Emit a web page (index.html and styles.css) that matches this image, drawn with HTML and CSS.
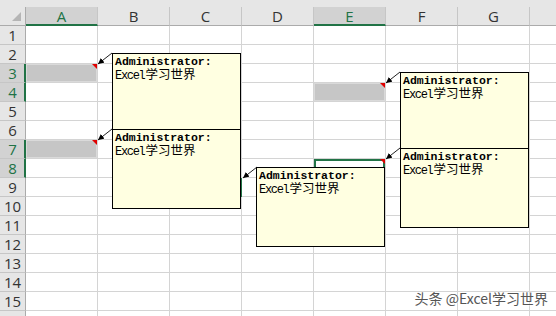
FILE: index.html
```html
<!DOCTYPE html>
<html lang="zh-CN">
<head>
  <meta charset="UTF-8" />
  <title>批注</title>
  <link rel="stylesheet" href="styles.css">
</head>
<body>
  <div class="sheet">
    <div class="head">
      <div class="corner">
        <svg width="26" height="19" viewBox="0 0 26 19"><polygon points="12,14 21,5 21,14" fill="#b5b5b5"/></svg>
      </div>
      <div class="ch on">A</div>
      <div class="ch">B</div>
      <div class="ch">C</div>
      <div class="ch">D</div>
      <div class="ch on">E</div>
      <div class="ch">F</div>
      <div class="ch">G</div>
      <div class="ch last"></div>
    </div>

    <div class="row"><div class="rh">1</div><div class="c"></div><div class="c"></div><div class="c"></div><div class="c"></div><div class="c"></div><div class="c"></div><div class="c"></div><div class="c last"></div></div>
    <div class="row"><div class="rh">2</div><div class="c"></div><div class="c"></div><div class="c"></div><div class="c"></div><div class="c"></div><div class="c"></div><div class="c"></div><div class="c last"></div></div>
    <div class="row"><div class="rh on">3</div><div class="c sel note-mark"></div><div class="c"></div><div class="c"></div><div class="c"></div><div class="c"></div><div class="c"></div><div class="c"></div><div class="c last"></div></div>
    <div class="row"><div class="rh on">4</div><div class="c"></div><div class="c"></div><div class="c"></div><div class="c"></div><div class="c sel note-mark"></div><div class="c"></div><div class="c"></div><div class="c last"></div></div>
    <div class="row"><div class="rh">5</div><div class="c"></div><div class="c"></div><div class="c"></div><div class="c"></div><div class="c"></div><div class="c"></div><div class="c"></div><div class="c last"></div></div>
    <div class="row"><div class="rh">6</div><div class="c"></div><div class="c"></div><div class="c"></div><div class="c"></div><div class="c"></div><div class="c"></div><div class="c"></div><div class="c last"></div></div>
    <div class="row"><div class="rh on">7</div><div class="c sel note-mark"></div><div class="c"></div><div class="c"></div><div class="c"></div><div class="c"></div><div class="c"></div><div class="c"></div><div class="c last"></div></div>
    <div class="row"><div class="rh on">8</div><div class="c"></div><div class="c"></div><div class="c"></div><div class="c"></div><div class="c active note-mark"></div><div class="c"></div><div class="c"></div><div class="c last"></div></div>
    <div class="row"><div class="rh">9</div><div class="c"></div><div class="c"></div><div class="c"></div><div class="c"></div><div class="c"></div><div class="c"></div><div class="c"></div><div class="c last"></div></div>
    <div class="row"><div class="rh">10</div><div class="c"></div><div class="c"></div><div class="c"></div><div class="c"></div><div class="c"></div><div class="c"></div><div class="c"></div><div class="c last"></div></div>
    <div class="row"><div class="rh">11</div><div class="c"></div><div class="c"></div><div class="c"></div><div class="c"></div><div class="c"></div><div class="c"></div><div class="c"></div><div class="c last"></div></div>
    <div class="row"><div class="rh">12</div><div class="c"></div><div class="c"></div><div class="c"></div><div class="c"></div><div class="c"></div><div class="c"></div><div class="c"></div><div class="c last"></div></div>
    <div class="row"><div class="rh">13</div><div class="c"></div><div class="c"></div><div class="c"></div><div class="c"></div><div class="c"></div><div class="c"></div><div class="c"></div><div class="c last"></div></div>
    <div class="row"><div class="rh">14</div><div class="c"></div><div class="c"></div><div class="c"></div><div class="c"></div><div class="c"></div><div class="c"></div><div class="c"></div><div class="c last"></div></div>
    <div class="row"><div class="rh">15</div><div class="c"></div><div class="c"></div><div class="c"></div><div class="c"></div><div class="c"></div><div class="c"></div><div class="c"></div><div class="c last"></div></div>
    <div class="row tail"><div class="rh"></div><div class="c"></div><div class="c"></div><div class="c"></div><div class="c"></div><div class="c"></div><div class="c"></div><div class="c"></div><div class="c last"></div></div>

    <div class="edge"></div>

    <svg class="arrows" width="556" height="316" viewBox="0 0 556 316">
      <defs>
        <marker id="tip" markerUnits="userSpaceOnUse" markerWidth="7" markerHeight="7" refX="6" refY="3" orient="auto">
          <path d="M0,0 L6,3 L0,6 z" fill="#000"/>
        </marker>
      </defs>
      <line x1="112" y1="53" x2="98" y2="64" marker-end="url(#tip)"/>
      <line x1="112" y1="129" x2="98" y2="140" marker-end="url(#tip)"/>
      <line x1="257" y1="167" x2="243" y2="178" marker-end="url(#tip)"/>
      <line x1="400" y1="72" x2="386" y2="83" marker-end="url(#tip)"/>
      <line x1="400" y1="148" x2="386" y2="159" marker-end="url(#tip)"/>
    </svg>

    <div class="note n1"><b>Administrator:</b><br><span class="lat">Excel</span>学习世界</div>
    <div class="note n2"><b>Administrator:</b><br><span class="lat">Excel</span>学习世界</div>
    <div class="note n3"><b>Administrator:</b><br><span class="lat">Excel</span>学习世界</div>
    <div class="note n4"><b>Administrator:</b><br><span class="lat">Excel</span>学习世界</div>
    <div class="note n5"><b>Administrator:</b><br><span class="lat">Excel</span>学习世界</div>

    <div class="mark">头条 @Excel学习世界</div>
  </div>
</body>
</html>
```

FILE: styles.css
```css
* {
  box-sizing: border-box;
  margin: 0;
  padding: 0;
}

body {
  background: #fff;
  width: 556px;
  height: 316px;
  overflow: hidden;
  font-family: 'Open Sans', 'Liberation Sans', sans-serif;
}

.sheet {
  position: relative;
  width: 556px;
  height: 316px;
  overflow: hidden;
}

/* column header */
.head {
  display: flex;
  height: 26px;
  padding-top: 7px;
  background: #e6e6e6;
}

.corner {
  width: 26px;
  height: 19px;
  border-right: 1px solid #ababab;
  border-bottom: 1px solid #ababab;
}

.corner svg {
  display: block;
}

.ch {
  width: 72px;
  height: 19px;
  border-right: 1px solid #c6c6c6;
  border-bottom: 1px solid #ababab;
  font-size: 15px;
  line-height: 18px;
  text-align: center;
  color: #333;
}

.ch.on {
  background: #d2d2d2;
  color: #217346;
  border-bottom: 2px solid #217346;
}

.ch.last,
.c.last {
  flex: 1;
  border-right: none;
}

/* rows */
.row {
  display: flex;
  height: 19px;
}

.row.tail {
  height: 6px;
}

.rh {
  width: 26px;
  background: #e6e6e6;
  border-right: 1px solid #ababab;
  border-bottom: 1px solid #c6c6c6;
  font-size: 15px;
  line-height: 19px;
  text-align: center;
  color: #333;
}

.rh.on {
  background: #d2d2d2;
  color: #217346;
  border-right: 2px solid #217346;
  padding-left: 1px;
}

.c {
  width: 72px;
  border-right: 1px solid #d4d4d4;
  border-bottom: 1px solid #d4d4d4;
}

.c.sel {
  background: #c6c6c6;
  box-shadow: inset 0 0 0 1px #dadada;
}

.c.active {
  box-shadow: inset 0 0 0 2px #217346;
}

.note-mark {
  position: relative;
}

.note-mark::after {
  content: "";
  position: absolute;
  top: 0;
  right: 0;
  border-top: 5px solid #e00000;
  border-left: 5px solid transparent;
}

.edge {
  position: absolute;
  left: 240px;
  top: 178px;
  width: 2px;
  height: 19px;
  background: #217346;
}

/* comments */
.arrows {
  position: absolute;
  left: 0;
  top: 0;
}

.arrows line {
  stroke: #222;
  stroke-width: 1;
}

.note {
  position: absolute;
  width: 129px;
  height: 80px;
  background: #ffffe1;
  border: 1px solid #000;
  padding: 1px 0 0 2px;
  font-family: 'Liberation Mono', 'Noto Sans CJK SC', monospace;
  font-size: 12.5px;
  line-height: 14px;
  color: #000;
  white-space: nowrap;
}

.note b {
  font-size: 11.5px;
}

.lat {
  font-size: 12px;
  letter-spacing: -1.3px;
  margin-right: 1px;
}

.n1 { left: 112px; top: 53px; }
.n2 { left: 112px; top: 129px; }
.n3 { left: 256px; top: 167px; }
.n4 { left: 400px; top: 72px; }
.n5 { left: 400px; top: 148px; }

.mark {
  position: absolute;
  right: 8px;
  top: 288px;
  font-family: 'Noto Sans CJK SC', 'Noto Sans', sans-serif;
  font-size: 14px;
  line-height: 20px;
  color: #555;
  text-shadow: 0 0 2px #fff, 0 0 2px #fff;
}
```
